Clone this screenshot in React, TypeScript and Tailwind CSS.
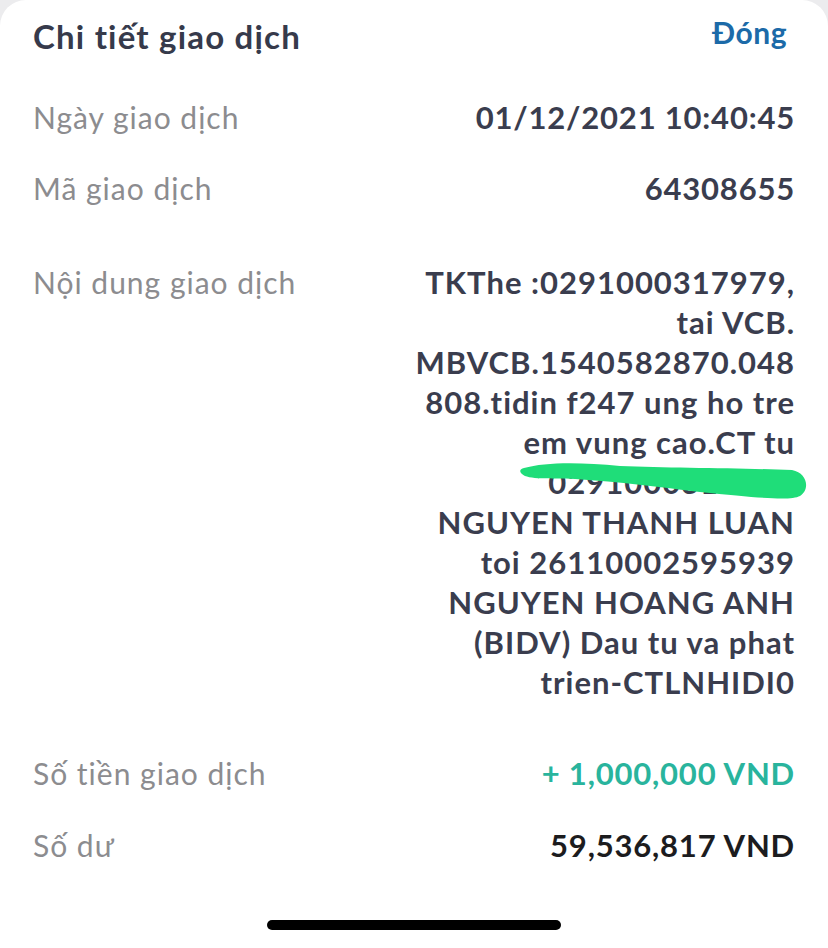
import React from "react";

const lines = [
  "TKThe :0291000317979,",
  "tai VCB.",
  "MBVCB.1540582870.048",
  "808.tidin f247 ung ho tre",
  "em vung cao.CT tu",
  "0291000317979",
  "NGUYEN THANH LUAN",
  "toi 26110002595939",
  "NGUYEN HOANG ANH",
  "(BIDV) Dau tu va phat",
  "trien-CTLNHIDI0",
];

const label = "text-[30px] tracking-[1px] text-[#8c8c8f]";
const value = "text-[31px] font-bold tracking-[0.8px]";

export default function App() {
  return (
    <div
      className="w-[828px] h-[948px] bg-[#ececee] overflow-hidden"
      style={{ fontFamily: "Lato, 'Noto Sans', sans-serif" }}
    >
      <div className="relative h-full bg-white rounded-t-[26px] px-[33px] flex flex-col">
        <div className="flex items-center justify-between h-[74px]">
          <div className="text-[33px] font-bold tracking-[1.2px] text-[#363a4b]">Chi tiết giao dịch</div>
          <div className="text-[30px] font-bold tracking-[0.5px] text-[#1c6aa8] pr-[8px] pb-[10px]">Đóng</div>
        </div>

        <div className="flex items-center justify-between mt-[21px] h-[44px]">
          <div className={label}>Ngày giao dịch</div>
          <div className={`${value} text-[#3a3d4e] tracking-[0.5px]`}>01/12/2021 10:40:45</div>
        </div>

        <div className="flex items-center justify-between mt-[27px] h-[44px]">
          <div className={label}>Mã giao dịch</div>
          <div className={`${value} text-[#3a3d4e]`}>64308655</div>
        </div>

        <div className="flex items-start justify-between mt-[52px]">
          <div className={`${label} leading-[40px]`}>Nội dung giao dịch</div>
          <div className={`${value} text-[#3a3d4e] text-right leading-[40px] tracking-[1px]`}>
            {lines.map((l, i) => (
              <div key={i} className="whitespace-nowrap">{l}</div>
            ))}
          </div>
        </div>

        <div className="flex items-center justify-between mt-[49px] h-[44px]">
          <div className={label}>Số tiền giao dịch</div>
          <div className={`${value} text-[#29b49d]`}>+ 1,000,000 VND</div>
        </div>

        <div className="flex items-center justify-between mt-[28px] h-[44px]">
          <div className={label}>Số dư</div>
          <div className={`${value} text-[#1c1c1e]`}>59,536,817 VND</div>
        </div>

        <div className="mt-[53px] flex justify-center">
          <div className="w-[294px] h-[10px] rounded-full bg-black" />
        </div>

        <svg
          className="absolute left-0 top-0 pointer-events-none"
          width="828"
          height="948"
          viewBox="0 0 828 948"
        >
          <path
            d="M524 468 C 545 462, 580 462, 620 466 C 670 468, 740 468, 792 470 C 808 473, 810 490, 800 496 C 790 501, 760 498, 700 492 C 660 487, 620 482, 575 479 C 550 478, 528 480, 522 474 C 519 471, 520 469, 524 468 Z"
            fill="#1fdd79"
          />
        </svg>
      </div>
    </div>
  );
}
